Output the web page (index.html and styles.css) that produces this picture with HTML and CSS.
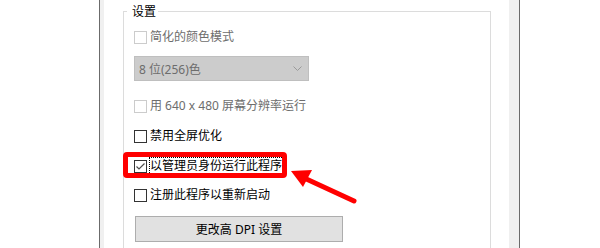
FILE: index.html
```html
<!DOCTYPE html>
<html>
    <head>
        <meta charset="utf-8">
        <link rel="stylesheet" href="styles.css">
    </head>
    <body>
        <div class="dialog">
            <div class="page">
                <div class="group">
                    <span class="group-title">设置</span>

                    <div class="check disabled">
                        <span class="box"></span>
                        <span class="label">简化的颜色模式</span>
                    </div>

                    <div class="select">
                        <span>8 位(256)色</span>
                        <svg class="chevron" width="9" height="6" viewBox="0 0 9 6">
                            <polyline points="0.5,0.5 4.5,4.5 8.5,0.5" fill="none" stroke="#9a9a9a" stroke-width="1"/>
                        </svg>
                    </div>

                    <div class="check disabled row-3">
                        <span class="box"></span>
                        <span class="label">用 640 x 480 屏幕分辨率运行</span>
                    </div>

                    <div class="check row-4">
                        <span class="box"></span>
                        <span class="label">禁用全屏优化</span>
                    </div>

                    <div class="check row-5">
                        <span class="box">
                            <svg width="11" height="11" viewBox="0 0 11 11">
                                <polyline points="1.5,5.5 4,8 9.5,2.5" fill="none" stroke="#4d4d4d" stroke-width="1.2"/>
                            </svg>
                        </span>
                        <span class="label focused">以管理员身份运行此程序</span>
                    </div>

                    <div class="check row-6">
                        <span class="box"></span>
                        <span class="label">注册此程序以重新启动</span>
                    </div>

                    <button class="dpi-button">更改高 DPI 设置</button>

                    <div class="highlight"></div>
                </div>
            </div>
        </div>

        <svg class="arrow" width="600" height="248" viewBox="0 0 600 248">
            <line x1="302" y1="177" x2="354" y2="201" stroke="#ff0000" stroke-width="5" stroke-linecap="round"/>
            <polygon points="291,171 312,170 303,187" fill="#ff0000"/>
        </svg>
    </body>
</html>
```

FILE: styles.css
```css
html, body{
    margin: 0;
    padding: 0;
}

body{
    width: 600px;
    height: 248px;
    overflow: hidden;
    position: relative;
    background-color: #ffffff;
    font-family: "Segoe UI", "Noto Sans", "Noto Sans CJK SC", sans-serif;
    font-size: 12px;
    color: #000000;
}

.dialog{
    box-sizing: border-box;
    margin-left: 99px;
    width: 421px;
    height: 248px;
    padding: 0 10px 0 4px;
    background-color: #f0f0f0;
    border-left: 1px solid #6b6b6b;
    border-right: 1px solid #6b6b6b;
}

.page{
    height: 100%;
    padding-left: 19px;
    background-color: #ffffff;
    overflow: hidden;
}

.group{
    position: relative;
    box-sizing: border-box;
    width: 368px;
    height: 260px;
    margin-top: 11px;
    padding: 15px 0 0 10px;
    border: 1px solid #dcdcdc;
    display: flex;
    flex-direction: column;
    align-items: flex-start;
}

.group-title{
    position: absolute;
    top: -7px;
    left: 3px;
    padding: 0 2px 0 5px;
    line-height: 12px;
    background-color: #ffffff;
    font-family: "Noto Sans CJK SC", sans-serif;
}

.check{
    display: flex;
    align-items: center;
    height: 20px;
}

.box{
    box-sizing: border-box;
    width: 13px;
    height: 13px;
    border: 1px solid #333333;
    background-color: #ffffff;
    display: flex;
    align-items: center;
    justify-content: center;
}

.label{
    margin-left: 3px;
    line-height: 16px;
}

.disabled .box{
    border-color: #cccccc;
}

.disabled .label{
    color: #6d6d6d;
}

.focused{
    margin-left: 2px;
    padding: 0 1px 0 0;
    border: 1px dotted #000000;
}

.select{
    box-sizing: border-box;
    width: 175px;
    height: 25px;
    margin-top: 9px;
    padding: 0 6px 0 4px;
    display: flex;
    align-items: center;
    justify-content: space-between;
    background-color: #cccccc;
    border: 1px solid #bfbfbf;
    color: #6d6d6d;
}

.row-3{
    margin-top: 15px;
}

.row-4{
    margin-top: 10px;
}

.row-5{
    margin-top: 10px;
}

.row-6{
    margin-top: 9px;
}

.dpi-button{
    box-sizing: border-box;
    width: 208px;
    height: 26px;
    margin: 11px 0 0 1px;
    padding: 0;
    background-color: #e1e1e1;
    border: 1px solid #adadad;
    font-family: inherit;
    font-size: 12px;
    color: #000000;
}

.highlight{
    position: absolute;
    left: -1px;
    top: 140px;
    width: 164px;
    height: 26px;
    box-sizing: border-box;
    border: 5px solid #ff0000;
    border-radius: 4px;
}

.arrow{
    position: absolute;
    left: 0;
    top: 0;
    pointer-events: none;
}
```
